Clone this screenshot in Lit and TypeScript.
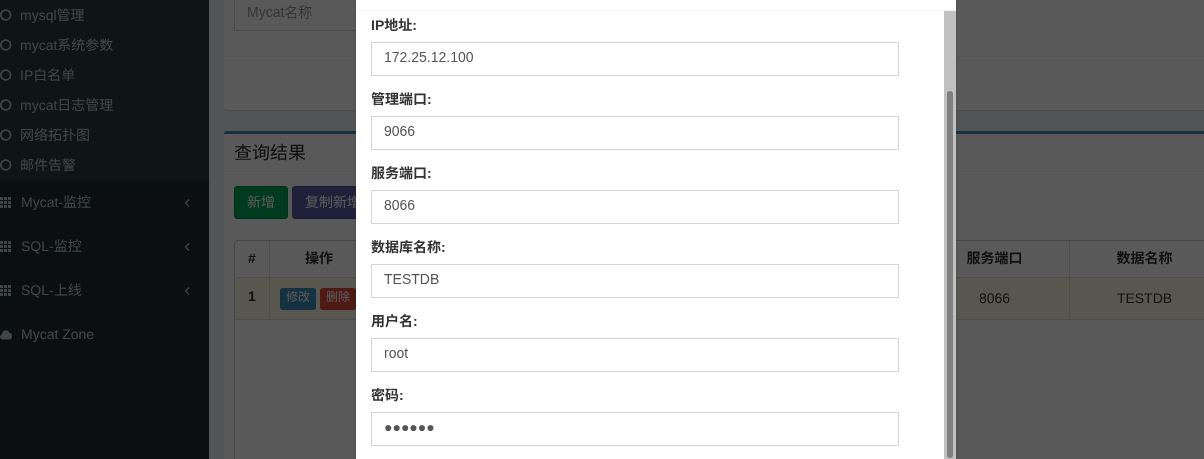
import { LitElement, html, css, svg } from "lit";
import { customElement } from "lit/decorators.js";

const ring = html`<svg class="ring" width="12" height="12" viewBox="0 0 12 12"><circle cx="5.7" cy="6" r="4.9" fill="none" stroke="currentColor" stroke-width="1.7"/></svg>`;
const grid = html`<svg class="ico" width="12" height="12" viewBox="0 0 12 12"><g fill="currentColor">${[0, 4, 8].map(
  (y) => [0, 4, 8].map((x) => svg`<rect x="${x}" y="${y}" width="3" height="3"/>`),
)}</g></svg>`;
const cloud = html`<svg class="ico" width="12" height="12" viewBox="0 0 12 12"><path fill="currentColor" d="M2.6 10.6C1.1 10.6 0 9.4 0 8c0-1.2.8-2.2 1.9-2.5C2 3.2 3.6 1.2 5.8 1.2c1.6 0 3 1 3.6 2.5 1.4.1 2.4 1.2 2.4 2.6v.4c.1.4.2.8.2 1.1 0 1.6-1.2 2.8-2.7 2.8z"/></svg>`;
const angle = html`<svg class="angle" width="6" height="10" viewBox="0 0 6 10"><path d="M5 1.5 1.5 5 5 8.5" fill="none" stroke="currentColor" stroke-width="1.2"/></svg>`;

const subItems = ["mysql管理", "mycat系统参数", "IP白名单", "mycat日志管理", "网络拓扑图", "邮件告警"];
const fields = [
  ["IP地址:", "172.25.12.100"],
  ["管理端口:", "9066"],
  ["服务端口:", "8066"],
  ["数据库名称:", "TESTDB"],
  ["用户名:", "root"],
  ["密码:", "●●●●●●"],
];

@customElement("app-root")
export class AppRoot extends LitElement {
  static styles = css`
    :host {
      display: block;
      position: relative;
      width: 1204px;
      height: 459px;
      overflow: hidden;
      font-family: "Liberation Sans", "Noto Sans CJK SC", sans-serif;
      font-size: 14px;
      color: #333;
      background: #ecf0f5;
      text-rendering: geometricPrecision;
    }
    .page { display: flex; height: 459px; will-change: transform; }
    .side { width: 209px; flex: none; background: #222d32; color: #b8c7ce; }
    .sub { background: #2c3b41; height: 181px; }
    .sub div { display: flex; align-items: center; height: 30px; gap: 8px; }
    .sub span { padding-bottom: 1px; }
    .ring { flex: none; }
    .top { display: flex; align-items: center; height: 44px; gap: 9px; padding-right: 19px; }
    .top span { flex: 1; padding-bottom: 3px; }
    .ico { flex: none; }
    .angle { flex: none; }
    .main { flex: 1; min-width: 0; padding: 0 0 0 15px; overflow: hidden; }
    .box { background: #fff; border-radius: 3px; box-shadow: 0 1px 1px rgba(0, 0, 0, 0.1); width: 1000px; }
    .box1 { height: 110px; margin-bottom: 21px; }
    .box1 .fbody { height: 56px; padding: 0 10px; border-bottom: 1px solid #f4f4f4; overflow: hidden; }
    input {
      display: block; box-sizing: border-box; height: 34px; margin: 0; border: 1px solid #d2d6de;
      border-radius: 0; padding: 4px 12px 8px; font: inherit; color: #555; background: #fff; outline: none;
    }
    .ph { width: 300px; margin-top: -3px; }
    .ph::placeholder { color: #999; }
    .box2 { border-top: 3px solid #3c8dbc; height: 340px; }
    .bh { height: 41px; box-sizing: border-box; padding: 6px 10px 0; font-size: 18px; line-height: 26px; border-bottom: 1px solid #f4f4f4; color: #2a2a2a; }
    .btns { display: flex; gap: 4px; padding: 11px 10px 0; }
    .btn { height: 33px; box-sizing: border-box; border-radius: 3px; color: #fff; white-space: nowrap; padding: 0; }
    .green { background: #00a65a; border: 1px solid #008d4c; line-height: 31px; width: 54px; text-align: center; }
    .purple { background: #605ca8; border: 1px solid #555299; line-height: 31px; width: 110px; padding-left: 12px; }
    table {
      border-collapse: separate; border-spacing: 0; table-layout: fixed; width: 987px;
      margin: 21px 0 0 10px; border: 1px solid #ccc; border-radius: 4px 0 0 0; height: 400px;
    }
    th, td { border-right: 1px solid #ddd; border-bottom: 1px solid #ddd; text-align: center; padding: 0; overflow: hidden; white-space: nowrap; }
    th { height: 37px; font-weight: bold; padding-bottom: 2px; box-sizing: border-box; }
    .row td { height: 42px; background: #fcf8e3; padding-bottom: 2px; box-sizing: border-box; }
    .row td.num { font-weight: bold; padding-bottom: 5px; }
    .row td.acts-cell { padding-bottom: 0; }
    .fill td { border: none; padding: 0; }
    .acts { display: flex; gap: 4px; padding-left: 10px; }
    .xs { width: 36px; height: 22px; flex: none; border-radius: 3px; color: #fff; font-size: 12px; line-height: 18px; text-align: center; }
    .blue { background: #3c8dbc; }
    .red { background: #dd4b39; }

    .mask { position: absolute; inset: 0; background: rgba(0, 0, 0, 0.65); }
    .modal { position: absolute; left: 356px; top: 0; width: 600px; height: 459px; background: #fff; display: flex; flex-direction: column; box-shadow: 0 2px 3px rgba(0, 0, 0, 0.125); will-change: transform; }
    .mhead { height: 10px; flex: none; border-bottom: 1px solid #f4f4f4; }
    .mrow { flex: 1; display: flex; min-height: 0; }
    .mbody { flex: 1; padding: 4px 0 0 15px; }
    .field { height: 74px; }
    .field label { display: block; height: 20px; line-height: 20px; font-weight: bold; margin-bottom: 7px; }
    .field input { width: 528px; }
    .track { width: 12px; flex: none; background: #c1c1c1; padding: 80px 3px 0; box-sizing: border-box; }
    .thumb { height: 367px; background: #7f7f7f; border-radius: 3px; }
  `;

  render() {
    return html`
      <div class="page">
        <aside class="side">
          <div class="sub">${subItems.map((t) => html`<div>${ring}<span>${t}</span></div>`)}</div>
          <div class="top">${grid}<span>Mycat-监控</span>${angle}</div>
          <div class="top">${grid}<span>SQL-监控</span>${angle}</div>
          <div class="top">${grid}<span>SQL-上线</span>${angle}</div>
          <div class="top">${cloud}<span>Mycat Zone</span></div>
        </aside>
        <main class="main">
          <section class="box box1">
            <div class="fbody"><input class="ph" placeholder="Mycat名称" readonly /></div>
          </section>
          <section class="box box2">
            <div class="bh">查询结果</div>
            <div class="btns"><div class="btn green">新增</div><div class="btn purple">复制新增</div></div>
            <table>
              <colgroup><col style="width:35px" /><col style="width:99px" /><col /><col style="width:150px" /><col style="width:150px" /></colgroup>
              <tr><th>#</th><th>操作</th><th></th><th>服务端口</th><th>数据名称</th></tr>
              <tr class="row">
                <td class="num">1</td>
                <td class="acts-cell"><div class="acts"><div class="xs blue">修改</div><div class="xs red">删除</div></div></td>
                <td></td><td>8066</td><td>TESTDB</td>
              </tr>
              <tr class="fill"><td colspan="5"></td></tr>
            </table>
          </section>
        </main>
      </div>
      <div class="mask"></div>
      <div class="modal">
        <div class="mhead"></div>
        <div class="mrow">
          <div class="mbody">
            ${fields.map(
              ([l, v]) => html`<div class="field"><label>${l}</label><input .value=${v} readonly /></div>`,
            )}
          </div>
          <div class="track"><div class="thumb"></div></div>
        </div>
      </div>
    `;
  }
}
